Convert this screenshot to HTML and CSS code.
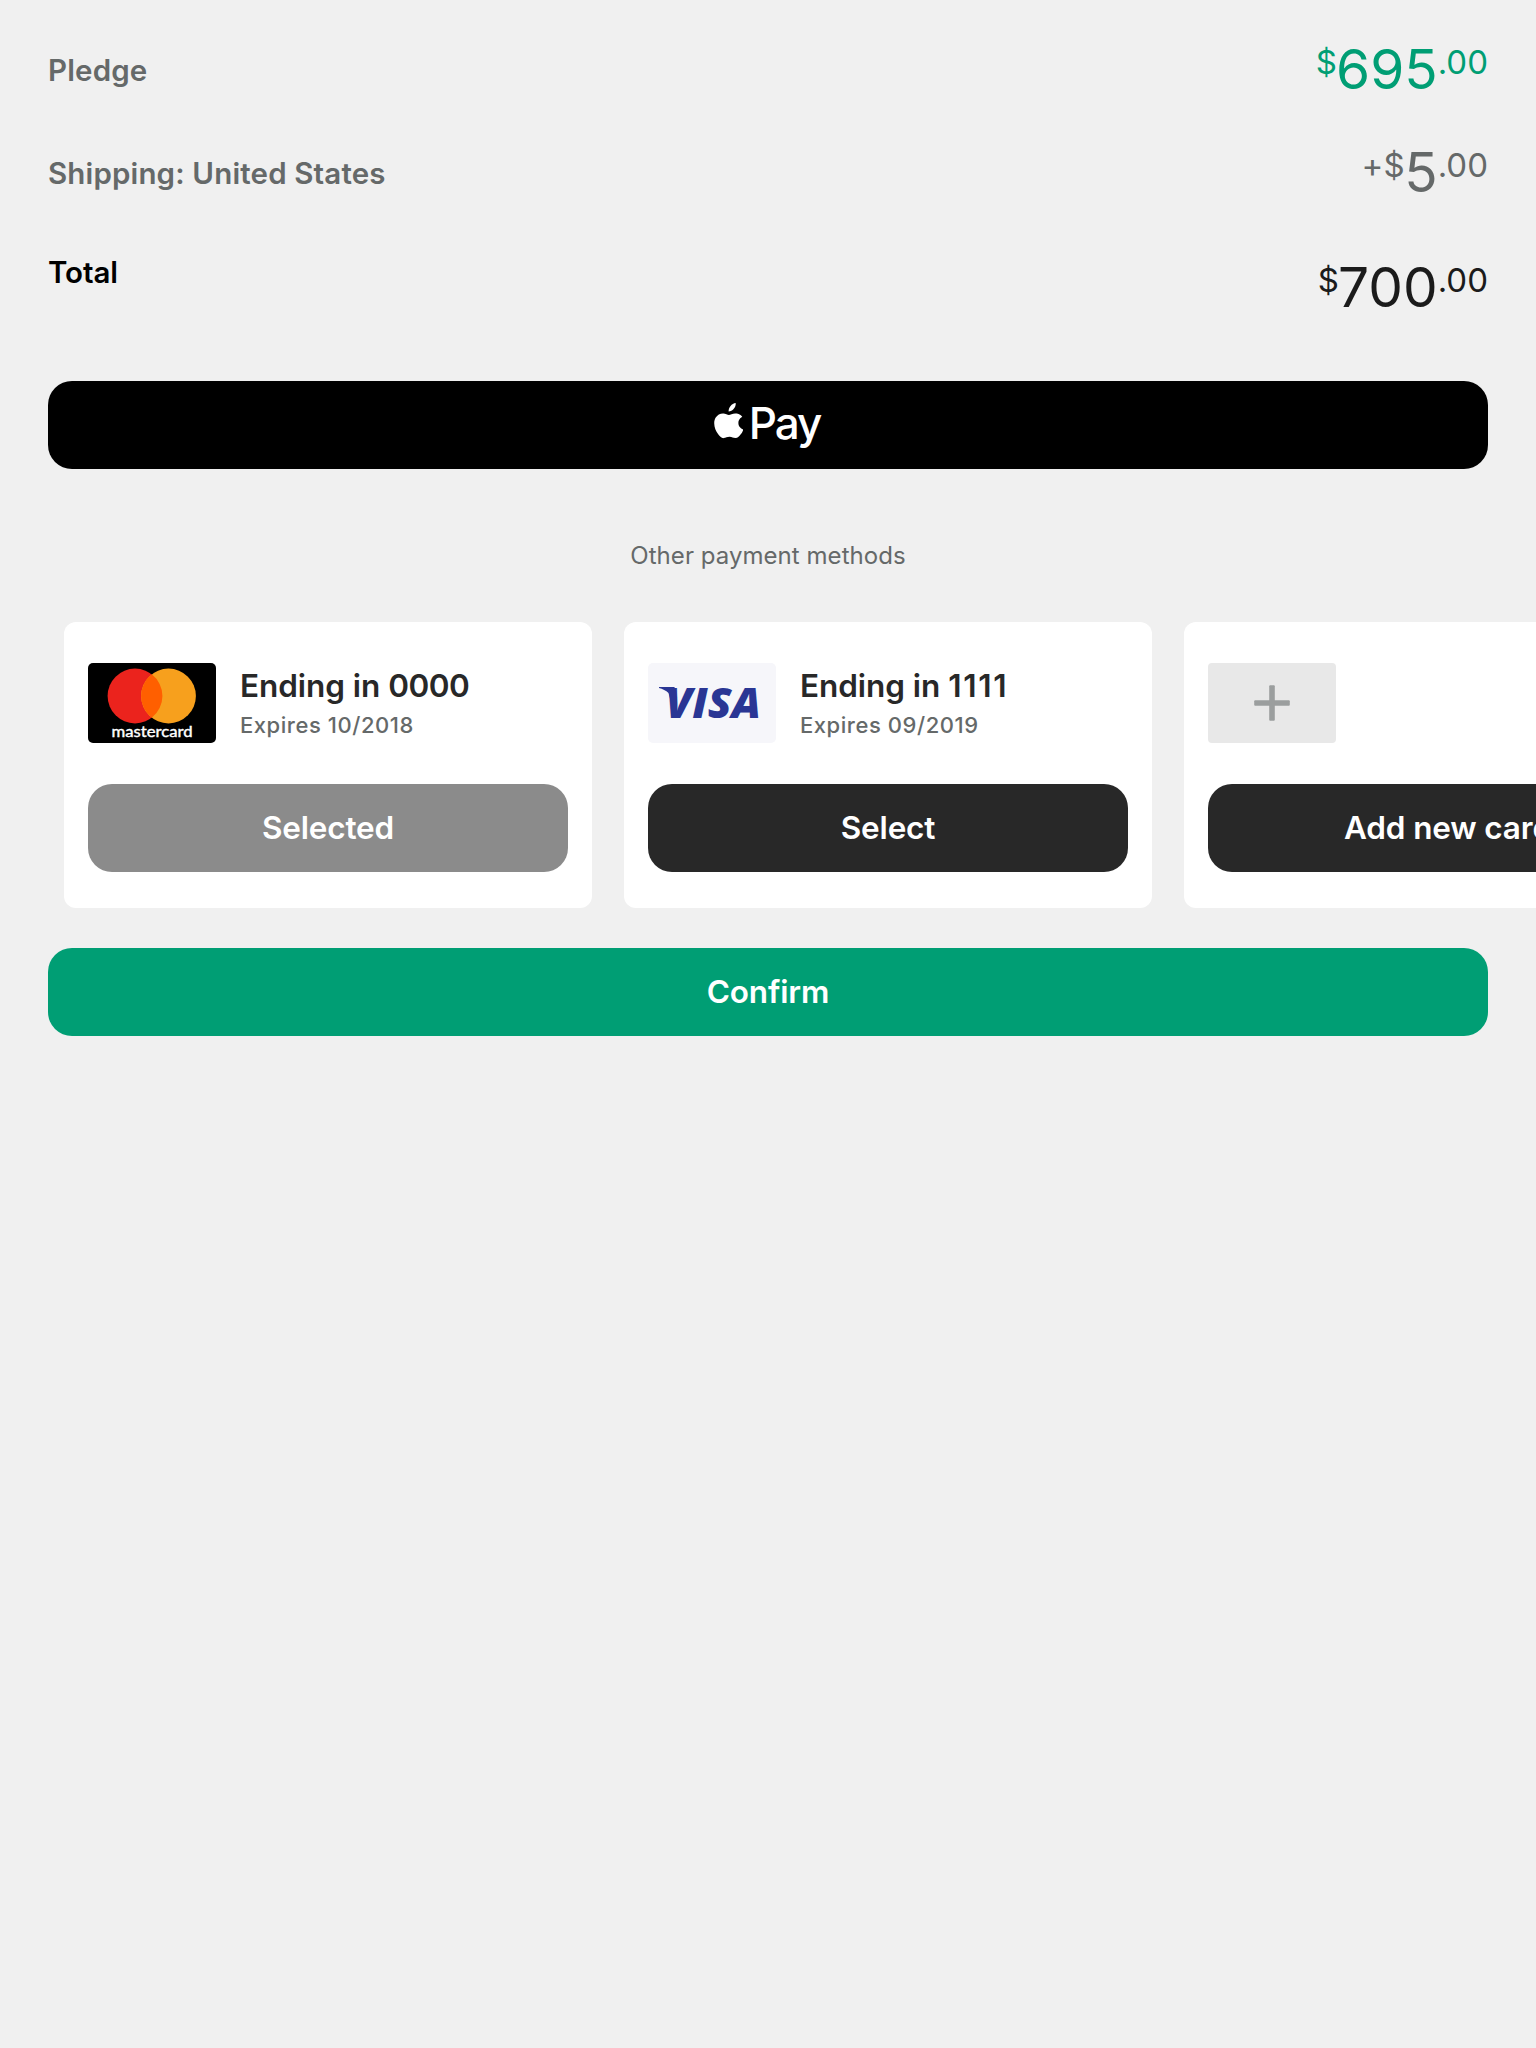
FILE: index.html
```html
<!DOCTYPE html>
<html lang="en">
<head>
<meta charset="utf-8">
<title>Pledge</title>
<link rel="stylesheet" href="styles.css">
</head>
<body>
<main class="checkout">
  <section class="summary">
    <div class="row row-pledge"><span class="label">Pledge</span><span class="price price-green"><span class="minor">$</span><span class="major">695</span><span class="minor cents">.00</span></span></div>
    <div class="row row-shipping"><span class="label">Shipping: United States</span><span class="price price-gray"><span class="minor plus">+</span><span class="minor">$</span><span class="major">5</span><span class="minor cents">.00</span></span></div>
    <div class="row row-total"><span class="label">Total</span><span class="price"><span class="minor">$</span><span class="major">700</span><span class="minor cents">.00</span></span></div>
  </section>

  <button class="button apple-pay" aria-label="Apple Pay">
    <svg class="apple" viewBox="0 0 29 36"><path d="M24.2 18.9c0-3.5 2.9-5.2 3-5.3-1.6-2.4-4.2-2.7-5.1-2.7-2.2-.2-4.2 1.3-5.3 1.3s-2.8-1.3-4.6-1.2c-2.3 0-4.5 1.4-5.7 3.4-2.5 4.2-.6 10.500 1.800 13.900 1.200 1.700 2.600 3.600 4.400 3.500 1.800-.1 2.500-1.100 4.600-1.100s2.700 1.100 4.600 1.100c1.900 0 3.100-1.700 4.300-3.400 1.300-2 1.900-3.900 1.900-4-.1 0-3.900-1.400-3.900-5.500z" transform="translate(-6.600 -2.400) scale(1.280 1.180)"/><path d="M14.600 8.600c-.2-4.300 3.100-8 7.100-8.600.5 4.400-3.300 8.400-7.100 8.600z"/></svg>
    <span class="pay">Pay</span>
  </button>

  <h2 class="heading">Other payment methods</h2>

  <section class="cards">
    <article class="card">
      <div class="card-info">
        <svg class="brand" viewBox="0 0 128 80"><rect width="128" height="80" rx="5"/><circle cx="47" cy="33" r="27.400" fill="#eb231d"/><circle cx="80.500" cy="33" r="27.400" fill="#f7a01d"/><path d="M63.750 11.300a27.400 27.400 0 0 1 0 43.400a27.400 27.400 0 0 1 0-43.400z" fill="#ff5f00"/><text class="mc" x="23.500" y="74" textLength="81" lengthAdjust="spacingAndGlyphs">mastercard</text></svg>
        <div class="details"><div class="ending">Ending in <span class="digits">0000</span></div><div class="expires">Expires 10/2018</div></div>
      </div>
      <button class="button select selected">Selected</button>
    </article>
    <article class="card">
      <div class="card-info">
        <svg class="brand" viewBox="0 0 128 80"><rect width="128" height="80" rx="5" fill="#f6f6fa"/><path d="M11 24H26.500L29 40 24.500 44 20.500 30C18 27.500 14.500 26 11 25z" fill="#2a3694"/><text class="visa" x="17.500" y="55" textLength="95.500" lengthAdjust="spacingAndGlyphs">VISA</text></svg>
        <div class="details"><div class="ending">Ending in <span class="digits digits-narrow">1111</span></div><div class="expires">Expires 09/2019</div></div>
      </div>
      <button class="button select">Select</button>
    </article>
    <article class="card">
      <div class="card-info">
        <svg class="brand" viewBox="0 0 128 80"><rect width="128" height="80" rx="4" fill="#e8e8e8"/><rect x="46.200" y="37.200" width="35.600" height="5.600" rx="1" fill="#9b9e9e"/><rect x="61.200" y="22.200" width="5.600" height="35.600" rx="1" fill="#9b9e9e"/></svg>
      </div>
      <button class="button select">Add new card</button>
    </article>
  </section>

  <button class="button confirm">Confirm</button>
</main>
</body>
</html>
```
FILE: styles.css
```css
* { box-sizing: border-box; }
body {
  margin: 0;
  min-height: 2048px;
  background: #f0f0f0;
  font-family: Inter, "Liberation Sans", sans-serif;
  overflow-x: hidden;
}
.checkout { display: flex; flex-direction: column; padding: 24px 48px 0; }
.summary { height: 357px; }
.row { display: flex; justify-content: space-between; height: 103px; color: #656969; }
.row-total { color: #000; }
.label { font-size: 29.500px; font-weight: 600; line-height: 36px; letter-spacing: .150px; padding-top: 28px; }
.row-total .label { padding-top: 24px; letter-spacing: -.1px; }
.price { display: flex; align-items: flex-start; font-weight: 400; padding-top: 12px; }
.row-total .price { padding-top: 24px; color: #1b1b1b; }
.price-green { color: #009e74; }
.major { font-size: 55px; line-height: 66px; }
.minor { font-size: 33px; line-height: 52px; letter-spacing: -.3px; }
.major + .minor { letter-spacing: 0; }
.price .minor:first-child { margin-right: -.5px; }
.plus { letter-spacing: .5px; }
.button {
  display: flex;
  align-items: center;
  justify-content: center;
  width: 100%;
  height: 88px;
  padding: 0 0 2px;
  border: 0;
  border-radius: 24px;
  color: #fff;
  font-family: inherit;
  font-size: 31.500px;
  font-weight: 600;
  letter-spacing: -.15px;
}
.apple-pay { background: #000; }
.apple { width: 29px; height: 36px; fill: #fff; margin: -6px 5px 0 0; }
.pay { font-size: 44px; font-weight: 500; line-height: 54px; letter-spacing: -2px; padding: 0 2px 3px 1px; }
.heading {
  margin: 71px 0 0;
  font-size: 24px;
  font-weight: 400;
  line-height: 32px;
  letter-spacing: .05px;
  text-align: center;
  color: #656969;
}
.cards { display: flex; gap: 32px; margin: 50px -48px 40px 16px; overflow: hidden; }
.card {
  flex: 0 0 528px;
  height: 286px;
  padding: 41px 24px 0;
  border-radius: 12px;
  background: #fff;
}
.card-info { display: flex; gap: 24px; height: 80px; margin-bottom: 41px; }
.brand { width: 128px; height: 80px; }
.mc { font: 400 15px Lato, sans-serif; fill: #fff; stroke: #fff; stroke-width: .4px; }
.visa { font: italic 800 43px "Open Sans", sans-serif; fill: #2a3694; }
.ending { padding-top: 3px; font-size: 31.500px; line-height: 40px; font-weight: 600; letter-spacing: -.05px; color: #282828; }
.digits { letter-spacing: -.5px; }
.digits-narrow { letter-spacing: 1.700px; }
.expires { font-size: 22px; line-height: 28px; margin-top: 5px; font-weight: 550; letter-spacing: .55px; color: #656969; }
.select { background: #282828; }
.selected { background: #8b8b8b; }
.confirm { background: #009e74; }
```
